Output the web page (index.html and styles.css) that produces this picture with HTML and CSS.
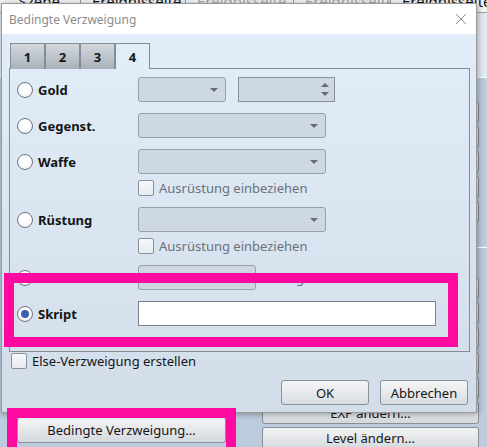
FILE: index.html
```html
<!DOCTYPE html>
<html lang="de">
<head>
  <meta charset="UTF-8">
  <meta name="viewport" content="width=device-width, initial-scale=1.0">
  <link rel="stylesheet" href="styles.css">
</head>
<body>

<!-- the editor window behind the dialog -->
<div class="app">
  <div class="app-tabs">
    <span class="app-tab tab-a">Szene</span>
    <span class="app-tab tab-b">Ereignisseite</span>
    <span class="app-tab tab-c off">Ereignisseite</span>
    <span class="app-tab tab-d off">Ereignisseite</span>
    <span class="app-tab tab-e">Ereignisseite</span>
  </div>
  <div class="app-head"></div>
  <div class="app-body">
    <div class="cmd-col cmd-left">
      <button class="cmd">Text anzeigen...</button>
      <button class="cmd">Auswahl anzeigen...</button>
      <button class="cmd">Schalter steuern...</button>
      <button class="cmd">Bedingte Verzweigung...</button>
    </div>
    <div class="cmd-col cmd-right">
      <div class="cmd-group">
        <button class="cmd">Gold ändern...</button>
        <button class="cmd">Gegenstände ändern...</button>
        <button class="cmd">Waffen ändern...</button>
        <button class="cmd">Rüstungen ändern...</button>
        <button class="cmd">Gruppe ändern...</button>
      </div>
      <div class="cmd-sep"></div>
      <div class="cmd-group">
        <button class="cmd">TP ändern...</button>
        <button class="cmd">MP ändern...</button>
        <button class="cmd">Status ändern...</button>
        <button class="cmd">Alles heilen...</button>
        <button class="cmd">Klasse ändern...</button>
        <button class="cmd">EXP ändern...</button>
        <button class="cmd">Level ändern...</button>
      </div>
    </div>
  </div>
</div>

<div class="dialog">
  <div class="titlebar">
    <span class="title">Bedingte Verzweigung</span>
    <svg class="close" width="12" height="12" viewBox="0 0 12 12">
      <path d="M1 1 L11 11 M11 1 L1 11" stroke="#8a8a8a" stroke-width="1" fill="none"/>
    </svg>
  </div>

  <div class="dialog-body">
    <div class="tabs">
      <div class="tab">1</div>
      <div class="tab">2</div>
      <div class="tab">3</div>
      <div class="tab active">4</div>
    </div>

    <div class="panel">
      <div class="row">
        <label class="opt"><span class="radio"></span>Gold</label>
        <div class="combo w-small"></div>
        <div class="spin"><span class="up"></span><span class="down"></span></div>
      </div>

      <div class="row">
        <label class="opt"><span class="radio"></span>Gegenst.</label>
        <div class="combo w-wide"></div>
      </div>

      <div class="row">
        <label class="opt"><span class="radio"></span>Waffe</label>
        <div class="combo w-wide"></div>
      </div>
      <div class="subrow">
        <span class="check"></span><span class="muted">Ausrüstung einbeziehen</span>
      </div>

      <div class="row">
        <label class="opt"><span class="radio"></span>Rüstung</label>
        <div class="combo w-wide"></div>
      </div>
      <div class="subrow">
        <span class="check"></span><span class="muted">Ausrüstung einbeziehen</span>
      </div>

      <div class="row">
        <label class="opt"><span class="radio"></span>Taste</label>
        <div class="field-off"></div>
        <span class="muted key-note">wird gedrückt</span>
      </div>

      <div class="row">
        <label class="opt"><span class="radio checked"></span>Skript</label>
        <div class="script-input"></div>
      </div>
    </div>

    <div class="else-row">
      <span class="check"></span><span>Else-Verzweigung erstellen</span>
    </div>

    <div class="actions">
      <button class="btn">OK</button>
      <button class="btn">Abbrechen</button>
    </div>
  </div>
</div>

<!-- pink highlight marks drawn over the screenshot -->
<div class="mark mark-script"></div>
<div class="mark mark-button"></div>

</body>
</html>
```

FILE: styles.css
```css
body {
  margin: 0;
  width: 487px;
  height: 447px;
  overflow: hidden;
  position: relative;
  font-family: "Noto Sans", "DejaVu Sans", sans-serif;
  font-size: 13px;
  color: #151515;
}

/* background editor window */
.app {
  height: 447px;
  background: #bccbdd;
  overflow: hidden;
}

.app-tabs {
  display: flex;
  height: 21px;
  margin-top: -9px;
  background: #f3f3f3;
  border-bottom: 1px solid #a0a0a0;
  font-size: 15px;
  line-height: 20px;
}

.app-tab {
  box-sizing: border-box;
  padding-left: 11px;
  border-right: 1px solid #9a9a9a;
  white-space: nowrap;
  overflow: hidden;
}

.app-tab.off { color: #a8a8a8; }
.tab-a { width: 81px; padding-left: 0; text-align: right; padding-right: 20px; }
.tab-b { width: 105px; }
.tab-c { width: 108px; }
.tab-d { width: 97px; }
.tab-e { flex: 1; border-right: none; }

.app-head {
  height: 64px;
  background: #e2eaf4;
  border-bottom: 1px solid #ffffff;
}

.app-body {
  display: flex;
}

.cmd-col {
  display: flex;
  flex-direction: column;
  gap: 3px;
}

.cmd-left {
  width: 209px;
  margin-left: 17px;
  padding-top: 252px;
}

.cmd-right {
  width: 217px;
  margin-left: 36px;
  padding-top: 23px;
}

.cmd-group {
  display: flex;
  flex-direction: column;
  gap: 3px;
}

.cmd-sep {
  height: 1px;
  background: #ffffff;
  margin: 21px -20px 26px;
}

.cmd {
  height: 22px;
  padding: 0;
  border: 1px solid #8a8f95;
  border-radius: 3px;
  background: linear-gradient(#f3f4f5, #d5d9de);
  font-family: inherit;
  font-size: 13px;
  color: #151515;
}

.cmd-left .cmd { height: 26px; }

/* dialog */
.dialog {
  position: absolute;
  left: 1px;
  top: 3px;
  width: 476px;
  height: 410px;
  box-sizing: border-box;
  border: 1px solid #9a9a9a;
  box-shadow: 1px 1px 6px rgba(0, 0, 0, 0.35);
  background: linear-gradient(#e3eefb, #d2dde9);
}

.titlebar {
  height: 30px;
  background: #ffffff;
  display: flex;
  align-items: center;
  justify-content: space-between;
  padding: 0 9px 0 7px;
}

.title {
  font-size: 12px;
  color: #8c8c8c;
}

.dialog-body {
  padding: 9px 6px 0 7px;
}

.tabs {
  display: flex;
  margin-left: 1px;
  margin-bottom: -1px;
  position: relative;
}

.tab {
  width: 35px;
  height: 26px;
  box-sizing: border-box;
  border: 1px solid #868c93;
  border-bottom: none;
  background: linear-gradient(#d2d8de, #a9b1b9);
  font-weight: bold;
  display: flex;
  align-items: center;
  justify-content: center;
  padding-top: 1px;
}

.tab.active {
  background: #e2edfa;
}

.panel {
  width: 461px;
  height: 284px;
  box-sizing: border-box;
  border: 1px solid #868c93;
  padding: 8px 0 0 7px;
}

.row {
  display: flex;
  align-items: center;
  height: 25px;
  margin-bottom: 11px;
}

.subrow {
  display: flex;
  align-items: center;
  gap: 5px;
  height: 16px;
  margin: -5px 0 11px 121px;
}

.opt {
  width: 121px;
  display: flex;
  align-items: center;
  gap: 5px;
  font-weight: bold;
}

.radio {
  width: 16px;
  height: 16px;
  box-sizing: border-box;
  border: 1px solid #70767c;
  border-radius: 50%;
  background: radial-gradient(circle at 50% 40%, #ffffff 40%, #e4e6e8);
  display: flex;
  align-items: center;
  justify-content: center;
}

.radio.checked::after {
  content: "";
  width: 8px;
  height: 8px;
  border-radius: 50%;
  background: #3b5fb3;
}

.check {
  width: 16px;
  height: 16px;
  box-sizing: border-box;
  border: 1px solid #8a9199;
  border-radius: 2px;
  background: linear-gradient(#f7f9fb, #e6ebf0);
}

.muted {
  color: #6b7178;
}

.combo,
.field-off {
  height: 25px;
  box-sizing: border-box;
  border: 1px solid #98a0a9;
  border-radius: 3px;
  background: #cdd8e3;
}

.combo {
  display: flex;
  align-items: center;
  justify-content: flex-end;
  padding-right: 7px;
}

.combo::after {
  content: "";
  border-left: 4px solid transparent;
  border-right: 4px solid transparent;
  border-top: 4px solid #666b70;
}

.w-small { width: 88px; }
.w-wide { width: 188px; }

.spin {
  width: 97px;
  height: 25px;
  margin-left: 12px;
  box-sizing: border-box;
  border: 1px solid #8a9199;
  background: #cdd8e3;
  display: flex;
  flex-direction: column;
  align-items: flex-end;
  justify-content: center;
  gap: 5px;
  padding-right: 5px;
}

.spin .up,
.spin .down {
  width: 0;
  height: 0;
  border-left: 4px solid transparent;
  border-right: 4px solid transparent;
}

.spin .up { border-bottom: 4px solid #666b70; }
.spin .down { border-top: 4px solid #666b70; }

.field-off { width: 118px; }

.key-note { margin-left: 10px; }

.script-input {
  width: 298px;
  height: 25px;
  box-sizing: border-box;
  border: 1px solid #7b838c;
  background: #ffffff;
}

.else-row {
  display: flex;
  align-items: center;
  gap: 5px;
  margin: 1px 0 0 2px;
  height: 16px;
}

.actions {
  display: flex;
  justify-content: flex-end;
  gap: 11px;
  margin: 11px 2px 0 0;
}

.btn {
  width: 88px;
  height: 25px;
  padding: 0;
  border: 1px solid #8c9197;
  border-radius: 3px;
  background: linear-gradient(#f4f5f6, #d9dde2);
  font-family: inherit;
  font-size: 13px;
  color: #151515;
}

/* highlight marks */
.mark {
  position: absolute;
  box-sizing: border-box;
  border: 10px solid #ff0aa0;
}

.mark-script {
  left: 4px;
  top: 273px;
  width: 454px;
  height: 74px;
}

.mark-button {
  left: 7px;
  top: 408px;
  width: 229px;
  height: 60px;
}
```
